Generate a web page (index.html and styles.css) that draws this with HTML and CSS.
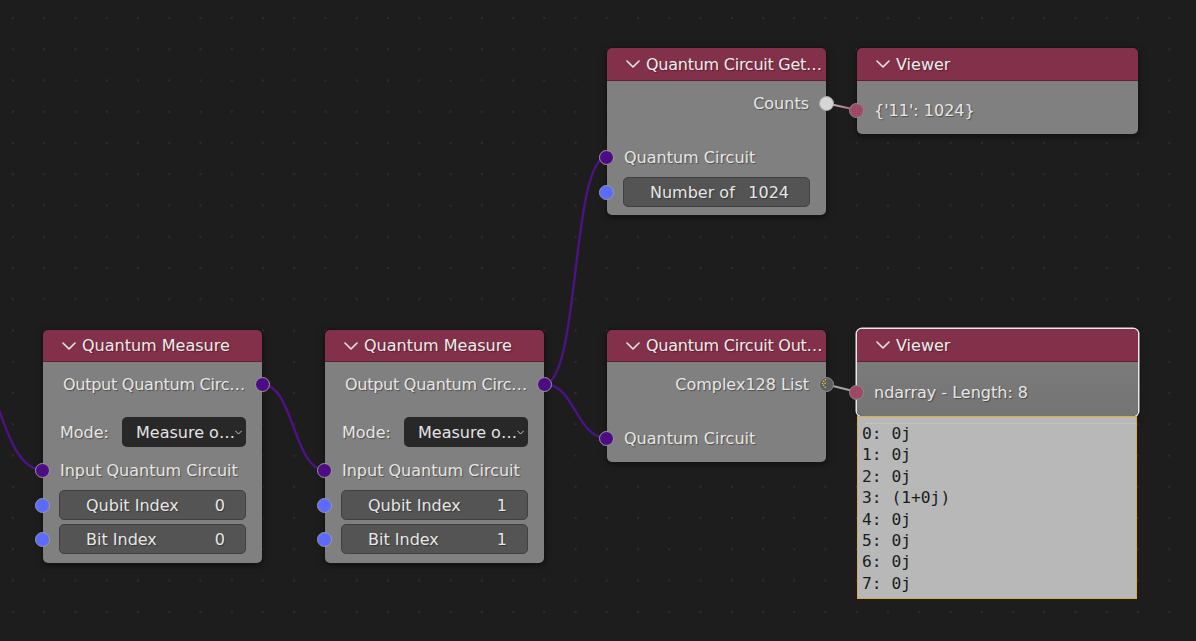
FILE: index.html
```html
<!DOCTYPE html>
<html>
<head>
<meta charset="utf-8">
<link rel="stylesheet" href="styles.css">
</head>
<body>
<div class="canvas">
  <svg class="wires" width="1196" height="641" viewBox="0 0 1196 641">
    <defs>
      <linearGradient id="gcount" x1="0" y1="0" x2="1" y2="0">
        <stop offset="0" stop-color="#c9c9c9"/>
        <stop offset="1" stop-color="#a8506e"/>
      </linearGradient>
    </defs>
    <path class="wire" d="M -50 335 C -3 335, -4 470, 43 470"/>
    <path class="wire" d="M 262 384 C 293 384, 294 470, 325 470"/>
    <path class="wire" d="M 544 384 C 580 384, 571 157, 607 157"/>
    <path class="wire" d="M 544 384 C 575 384, 576 438, 607 438"/>
    <path class="wire-count" d="M 825 103 L 857 110"/>
    <path class="wire-complex" d="M 825 384 L 857 392"/>
  </svg>

  <!-- Quantum Measure 1 -->
  <div class="node node-m1">
    <div class="node-header h32">
      <svg class="chev" width="14" height="8" viewBox="0 0 14 8"><polyline points="1,1 7,7 13,1"/></svg>
      <span class="title">Quantum Measure</span>
    </div>
    <div class="node-body">
      <div class="row row-out"><span class="label tight">Output Quantum Circ…</span><span class="socket s-right s-purple"></span></div>
      <div class="row row-mode"><span class="label">Mode:</span><div class="dropdown"><span>Measure o…</span><svg class="dd-chev" width="12" height="7" viewBox="0 0 12 7"><polyline points="1,1 6,6 11,1"/></svg></div></div>
      <div class="row row-in gap8"><span class="socket s-left s-purple"></span><span class="label">Input Quantum Circuit</span></div>
      <div class="row field-row gap5"><span class="socket s-left s-blue"></span><div class="field"><span>Qubit Index</span><span>0</span></div></div>
      <div class="row field-row gap4"><span class="socket s-left s-blue"></span><div class="field"><span>Bit Index</span><span>0</span></div></div>
    </div>
  </div>

  <!-- Quantum Measure 2 -->
  <div class="node node-m2">
    <div class="node-header h32">
      <svg class="chev" width="14" height="8" viewBox="0 0 14 8"><polyline points="1,1 7,7 13,1"/></svg>
      <span class="title">Quantum Measure</span>
    </div>
    <div class="node-body">
      <div class="row row-out"><span class="label tight">Output Quantum Circ…</span><span class="socket s-right s-purple"></span></div>
      <div class="row row-mode"><span class="label">Mode:</span><div class="dropdown"><span>Measure o…</span><svg class="dd-chev" width="12" height="7" viewBox="0 0 12 7"><polyline points="1,1 6,6 11,1"/></svg></div></div>
      <div class="row row-in gap8"><span class="socket s-left s-purple"></span><span class="label">Input Quantum Circuit</span></div>
      <div class="row field-row gap5"><span class="socket s-left s-blue"></span><div class="field"><span>Qubit Index</span><span>1</span></div></div>
      <div class="row field-row gap4"><span class="socket s-left s-blue"></span><div class="field"><span>Bit Index</span><span>1</span></div></div>
    </div>
  </div>

  <!-- Quantum Circuit Get Counts -->
  <div class="node node-get">
    <div class="node-header h33">
      <svg class="chev" width="14" height="8" viewBox="0 0 14 8"><polyline points="1,1 7,7 13,1"/></svg>
      <span class="title tight">Quantum Circuit Get…</span>
    </div>
    <div class="node-body pb8">
      <div class="row row-out"><span class="label">Counts</span><span class="socket s-right s-white"></span></div>
      <div class="row row-in gap24"><span class="socket s-left s-purple"></span><span class="label">Quantum Circuit</span></div>
      <div class="row field-row gap5"><span class="socket s-left s-blue"></span><div class="field"><span>Number of</span><span>1024</span></div></div>
    </div>
  </div>

  <!-- Viewer 1 -->
  <div class="node viewer node-v1">
    <div class="node-header h33">
      <svg class="chev" width="14" height="8" viewBox="0 0 14 8"><polyline points="1,1 7,7 13,1"/></svg>
      <span class="title">Viewer</span>
    </div>
    <div class="node-body pt14">
      <div class="row row-in"><span class="socket s-left s-pink"></span><span class="label">{'11': 1024}</span></div>
    </div>
  </div>

  <!-- Quantum Circuit Output State -->
  <div class="node node-out">
    <div class="node-header h32">
      <svg class="chev" width="14" height="8" viewBox="0 0 14 8"><polyline points="1,1 7,7 13,1"/></svg>
      <span class="title tight">Quantum Circuit Out…</span>
    </div>
    <div class="node-body">
      <div class="row row-out"><span class="label">Complex128 List</span><span class="socket s-right s-complex"><svg width="12" height="12" viewBox="0 0 12 12"><circle cx="2.6" cy="3.2" r="0.8"/><circle cx="4.2" cy="5.2" r="0.8"/><circle cx="2.6" cy="7.2" r="0.8"/><circle cx="4.2" cy="9.2" r="0.8"/><circle cx="4.4" cy="1.8" r="0.7"/><circle cx="1.6" cy="5.4" r="0.7"/></svg></span></div>
      <div class="row row-in gap24"><span class="socket s-left s-purple"></span><span class="label">Quantum Circuit</span></div>
    </div>
  </div>

  <!-- Viewer 2 (selected) -->
  <div class="node viewer selected node-v2">
    <div class="node-header h33">
      <svg class="chev" width="14" height="8" viewBox="0 0 14 8"><polyline points="1,1 7,7 13,1"/></svg>
      <span class="title">Viewer</span>
    </div>
    <div class="node-body pt15 grad">
      <div class="row row-in"><span class="socket s-left s-pink"></span><span class="label">ndarray - Length: 8</span></div>
    </div>
  </div>

  <div class="listing">
    <div class="line">0: 0j</div>
    <div class="line">1: 0j</div>
    <div class="line">2: 0j</div>
    <div class="line">3: (1+0j)</div>
    <div class="line">4: 0j</div>
    <div class="line">5: 0j</div>
    <div class="line">6: 0j</div>
    <div class="line">7: 0j</div>
  </div>
</div>
</body>
</html>
```

FILE: styles.css
```css
* { box-sizing: border-box; }
html, body {
  margin: 0;
  padding: 0;
  width: 1196px;
  height: 641px;
  overflow: hidden;
  background: #1d1d1d;
}
.canvas {
  position: relative;
  width: 1196px;
  height: 641px;
  background-color: #1d1d1d;
  background-image: radial-gradient(circle, #2c2c2c 1.1px, rgba(44,44,44,0) 1.6px);
  background-size: 31.25px 31.25px;
  background-position: -2.6px 2.4px;
  font-family: "DejaVu Sans", sans-serif;
  font-size: 16px;
  color: #e6e6e6;
}
.wires {
  position: absolute;
  left: 0;
  top: 0;
  z-index: 0;
}
.wire {
  fill: none;
  stroke: #4c1384;
  stroke-width: 2.4;
}
.wire-count {
  fill: none;
  stroke: url(#gcount);
  stroke-width: 2;
}
.wire-complex {
  fill: none;
  stroke: #a4a4a4;
  stroke-width: 2;
}

.node {
  position: absolute;
  z-index: 1;
  width: 219px;
  border-radius: 5px;
  box-shadow: 0 0 0 1px #151515, 0 2px 7px rgba(0,0,0,0.55);
  display: flex;
  flex-direction: column;
}
.node-m1 { left: 43px; top: 330px; }
.node-m2 { left: 325px; top: 330px; }
.node-get { left: 607px; top: 48px; }
.node-out { left: 607px; top: 330px; }
.node-v1 { left: 857px; top: 48px; width: 281px; }
.node-v2 { left: 857px; top: 329px; width: 281px; }
.selected {
  box-shadow: 0 0 0 1.5px #e9e9e9, 0 2px 7px rgba(0,0,0,0.55);
}

.node-header {
  background: #83304a;
  border-radius: 5px 5px 0 0;
  border-bottom: 1px solid #5e2236;
  display: flex;
  align-items: center;
  padding-left: 19px;
  gap: 6px;
  white-space: nowrap;
}
.h32 { height: 32px; }
.h33 { height: 33px; }
.chev {
  fill: none;
  stroke: #e6e6e6;
  stroke-width: 1.6;
  stroke-linecap: round;
  stroke-linejoin: round;
  flex: none;
}
.title {
  color: #ececec;
  text-shadow: 1px 1px 1px rgba(0,0,0,0.35);
}
.tight { letter-spacing: -0.25px; }

.node-body {
  background: #808080;
  border-radius: 0 0 5px 5px;
  padding: 7px 16px 9px 16px;
  display: flex;
  flex-direction: column;
}
.pb8 { padding-bottom: 8px; }
.pt14 { padding-top: 14px; }
.pt15 { padding-top: 15px; }
.grad { background: linear-gradient(#7b7b7b, #747474); }

.row {
  position: relative;
  height: 30px;
  display: flex;
  align-items: center;
  white-space: nowrap;
}
.label {
  text-shadow: 1px 1px 1px rgba(0,0,0,0.4);
}
.row-out { justify-content: flex-end; padding-right: 1px; }
.row-in { padding-left: 1px; }
.row-mode {
  margin-top: 18px;
  justify-content: space-between;
  padding-left: 1px;
}
.gap4 { margin-top: 4px; }
.gap5 { margin-top: 5px; }
.gap8 { margin-top: 8px; }
.gap24 { margin-top: 24px; }

.dropdown {
  width: 124px;
  height: 30px;
  background: #282828;
  border-radius: 5px;
  display: flex;
  align-items: center;
  justify-content: space-between;
  padding: 0 4px 0 14px;
  color: #e3e3e3;
}
.dd-chev {
  fill: none;
  stroke: #dcdcdc;
  stroke-width: 1.5;
  stroke-linecap: round;
  stroke-linejoin: round;
}

.field {
  flex: 1;
  height: 30px;
  background: #545454;
  border: 1px solid #404040;
  border-radius: 5px;
  display: flex;
  align-items: center;
  justify-content: space-between;
  padding: 0 20px 0 26px;
  color: #e6e6e6;
  text-shadow: 1px 1px 1px rgba(0,0,0,0.35);
}

.socket {
  position: absolute;
  top: 50%;
  width: 15px;
  height: 15px;
  margin-top: -7.5px;
  border-radius: 50%;
  border: 1px solid #9a9a9a;
  z-index: 2;
}
.s-left { left: -24px; }
.s-right { right: -24px; }
.s-purple { background: #4d0b84; }
.s-blue { background: #5b6bff; }
.s-white { background: #d6d6d6; border-color: #a8a8a8; }
.s-pink {
  background: radial-gradient(circle, #b05474 0.6px, transparent 0.9px) 0 0 / 2.5px 2.5px, #9b4563;
  border-color: #8a8a8a;
}
.s-complex {
  background: #5f5f5f;
  border-color: #8e8e8e;
  display: flex;
  align-items: center;
  justify-content: center;
}
.s-complex svg { fill: #e9c640; }

.listing {
  position: absolute;
  z-index: 1;
  left: 857px;
  top: 416px;
  width: 280px;
  height: 183px;
  background: #b8b8b8;
  border: 1px solid #d9ac45;
  padding: 6px 0 0 4px;
  font-family: "DejaVu Sans Mono", monospace;
  font-size: 16.3px;
  color: #1c1c1c;
}
.listing::before {
  content: "";
  position: absolute;
  left: 8px;
  right: 0;
  top: 6px;
  border-top: 1px dotted #cacaca;
}
.line {
  height: 21.4px;
  line-height: 21.4px;
}
```
